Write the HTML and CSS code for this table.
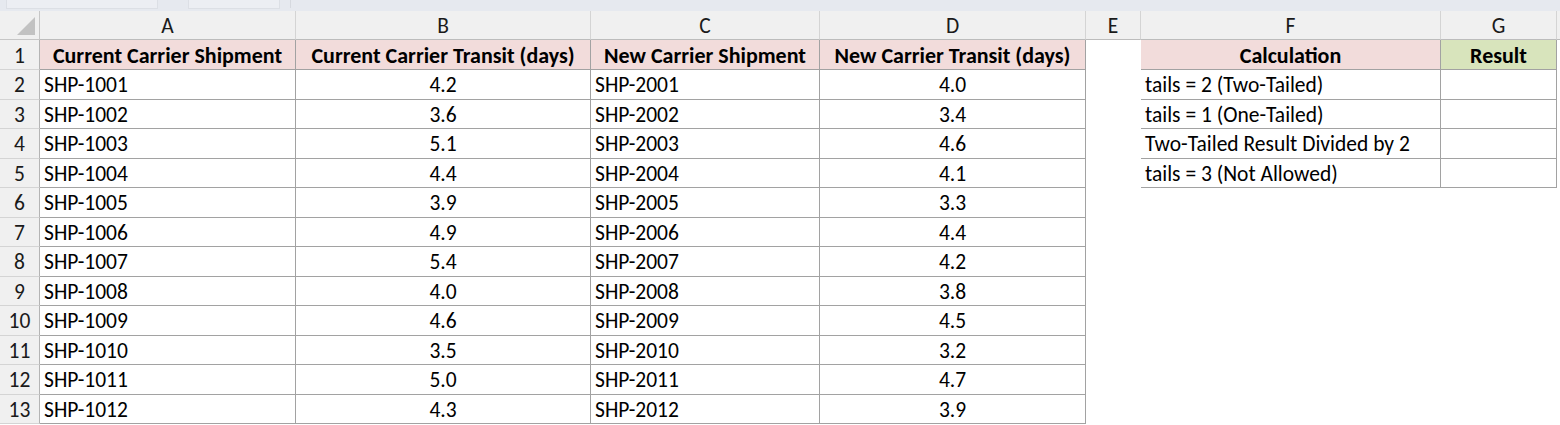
FILE: index.html
```html
<!DOCTYPE html>
<html>
<head>
<meta charset="utf-8">
<link rel="stylesheet" href="styles.css">
</head>
<body>
<div class="topbar"><span class="tab t1"></span><span class="tab t2"></span><span class="tab t3"></span></div>
<div class="sheet" id="sheet">
  <div class="corner"><span class="tri"></span></div>
  <div class="ch">A</div><div class="ch">B</div><div class="ch">C</div><div class="ch">D</div><div class="ch">E</div><div class="ch">F</div><div class="ch">G</div><div class="ch end"></div>

  <div class="rh">1</div>
  <div class="c hd">Current Carrier Shipment</div>
  <div class="c hd">Current Carrier Transit (days)</div>
  <div class="c hd">New Carrier Shipment</div>
  <div class="c hd">New Carrier Transit (days)</div>
  <div class="e"></div>
  <div class="c hd">Calculation</div>
  <div class="c hd green">Result</div>
  <div class="blank"></div>

  <div class="rh">2</div><div class="c">SHP-1001</div><div class="c num">4.2</div><div class="c">SHP-2001</div><div class="c num">4.0</div><div class="e"></div><div class="c">tails = 2 (Two-Tailed)</div><div class="c"></div><div class="blank"></div>
  <div class="rh">3</div><div class="c">SHP-1002</div><div class="c num">3.6</div><div class="c">SHP-2002</div><div class="c num">3.4</div><div class="e"></div><div class="c">tails = 1 (One-Tailed)</div><div class="c"></div><div class="blank"></div>
  <div class="rh">4</div><div class="c">SHP-1003</div><div class="c num">5.1</div><div class="c">SHP-2003</div><div class="c num">4.6</div><div class="e"></div><div class="c">Two-Tailed Result Divided by 2</div><div class="c"></div><div class="blank"></div>
  <div class="rh">5</div><div class="c">SHP-1004</div><div class="c num">4.4</div><div class="c">SHP-2004</div><div class="c num">4.1</div><div class="e"></div><div class="c">tails = 3 (Not Allowed)</div><div class="c"></div><div class="blank"></div>
  <div class="rh">6</div><div class="c">SHP-1005</div><div class="c num">3.9</div><div class="c">SHP-2005</div><div class="c num">3.3</div><div class="e"></div><div class="w"></div><div class="w"></div><div class="blank"></div>
  <div class="rh">7</div><div class="c">SHP-1006</div><div class="c num">4.9</div><div class="c">SHP-2006</div><div class="c num">4.4</div><div class="e"></div><div class="w"></div><div class="w"></div><div class="blank"></div>
  <div class="rh">8</div><div class="c">SHP-1007</div><div class="c num">5.4</div><div class="c">SHP-2007</div><div class="c num">4.2</div><div class="e"></div><div class="w"></div><div class="w"></div><div class="blank"></div>
  <div class="rh">9</div><div class="c">SHP-1008</div><div class="c num">4.0</div><div class="c">SHP-2008</div><div class="c num">3.8</div><div class="e"></div><div class="w"></div><div class="w"></div><div class="blank"></div>
  <div class="rh">10</div><div class="c">SHP-1009</div><div class="c num">4.6</div><div class="c">SHP-2009</div><div class="c num">4.5</div><div class="e"></div><div class="w"></div><div class="w"></div><div class="blank"></div>
  <div class="rh">11</div><div class="c">SHP-1010</div><div class="c num">3.5</div><div class="c">SHP-2010</div><div class="c num">3.2</div><div class="e"></div><div class="w"></div><div class="w"></div><div class="blank"></div>
  <div class="rh">12</div><div class="c">SHP-1011</div><div class="c num">5.0</div><div class="c">SHP-2011</div><div class="c num">4.7</div><div class="e"></div><div class="w"></div><div class="w"></div><div class="blank"></div>
  <div class="rh">13</div><div class="c">SHP-1012</div><div class="c num">4.3</div><div class="c">SHP-2012</div><div class="c num">3.9</div><div class="e"></div><div class="w"></div><div class="w"></div><div class="blank"></div>
</div>
</body>
</html>
```

FILE: styles.css
```css
html, body {
  margin: 0;
  padding: 0;
  background: #ffffff;
  overflow: hidden;
}
body {
  width: 1560px;
  height: 425px;
  font-family: Carlito, Calibri, "Open Sans", sans-serif;
  color: #000;
}
.topbar {
  height: 11px;
  background: #e6e9ef;
  display: flex;
  gap: 30px;
  padding-left: 4px;
  box-sizing: border-box;
}
.tab {
  display: block;
  height: 8px;
  border: 1px solid #dcdfe5;
  border-top: none;
  background: #eceef3;
}
.t1 { width: 150px; margin-left: 2px; }
.t2 { width: 90px; }
.t3 { width: 0; border: none; border-left: 1px solid #d6d9df; margin-left: -20px; }
.sheet {
  display: grid;
  grid-template-columns: 40px 256px 295px 229px 266px 55px 300px 116px 3px;
  grid-template-rows: 29px 30px repeat(12, 29.5px);
  font-size: 21.5px;
}
.corner {
  background: #f0f0f0;
  border-right: 1px solid #c6c6c6;
  border-bottom: 1px solid #c6c6c6;
  position: relative;
}
.tri {
  position: absolute;
  right: 4px;
  bottom: 4px;
  width: 0;
  height: 0;
  border-left: 18px solid transparent;
  border-bottom: 18px solid #c2c2c2;
}
.ch {
  background: #f0f0f0;
  border-right: 1px solid #d4d4d4;
  border-bottom: 1px solid #bcbcbc;
  display: flex;
  align-items: center;
  justify-content: center;
  color: #1a1a1a;
  padding-top: 1px;
  box-sizing: border-box;
}
.ch.end { border-right: none; }
.rh {
  background: #f0f0f0;
  border-right: 1px solid #b4b4b4;
  border-bottom: 1px solid #d4d4d4;
  display: flex;
  align-items: center;
  justify-content: center;
  color: #1a1a1a;
  padding-top: 2px;
  box-sizing: border-box;
}
.c {
  border-right: 1px solid #a2a2a2;
  border-bottom: 1px solid #a2a2a2;
  display: flex;
  align-items: center;
  padding-left: 4px;
  padding-top: 2px;
  white-space: nowrap;
  overflow: hidden;
  box-sizing: border-box;
}
.c.num { justify-content: center; padding-left: 0; }
.c.hd {
  background: #f2dcdb;
  font-weight: bold;
  justify-content: center;
  padding-left: 0;
  font-size: 22px;
}
.c.hd.green { background: #d8e4bc; }
```
